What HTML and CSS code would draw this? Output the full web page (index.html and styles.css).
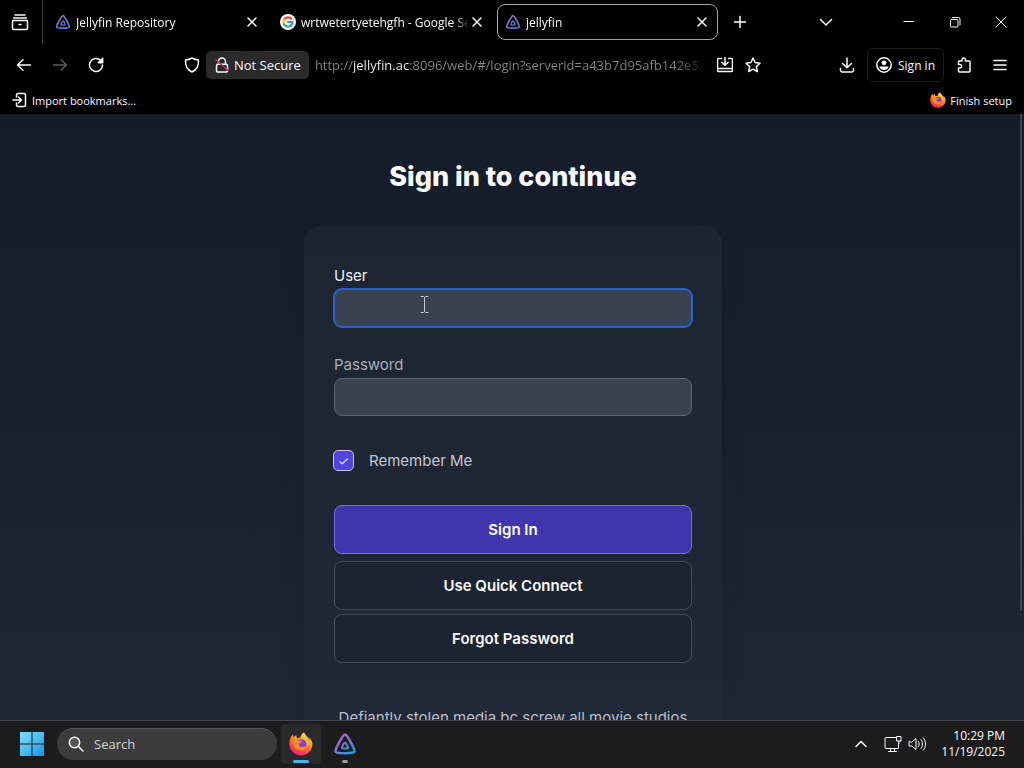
FILE: index.html
```html
<!DOCTYPE html>
<html lang="en">
<head>
  <meta charset="UTF-8">
  <meta name="viewport" content="width=device-width, initial-scale=1.0">
  <title>jellyfin</title>
  <link rel="stylesheet" href="styles.css">
</head>
<body>
  <!-- Shared icons -->
  <svg class="defs" width="0" height="0" aria-hidden="true">
    <defs>
      <linearGradient id="jellyGradient" x1="0" y1="0" x2="1" y2="1">
        <stop offset="0.25" stop-color="#a066cc"/>
        <stop offset="1" stop-color="#18a0e0"/>
      </linearGradient>
      <linearGradient id="jellyTabGradient" x1="0" y1="0" x2="1" y2="1">
        <stop offset="0.2" stop-color="#8a70b8"/>
        <stop offset="1" stop-color="#4a7fe0"/>
      </linearGradient>
      <linearGradient id="winGradient" x1="0" y1="0" x2="1" y2="1">
        <stop offset="0" stop-color="#7fe0fb"/>
        <stop offset="1" stop-color="#1299ea"/>
      </linearGradient>
      <linearGradient id="fireGradient" x1="0.8" y1="0" x2="0.3" y2="1">
        <stop offset="0" stop-color="#fff04a"/>
        <stop offset="0.4" stop-color="#ff9a25"/>
        <stop offset="0.75" stop-color="#ff4048"/>
        <stop offset="1" stop-color="#e52282"/>
      </linearGradient>
    </defs>
    <symbol id="close" viewBox="0 0 16 16"><path d="M4 4l8 8M12 4l-8 8"/></symbol>
    <symbol id="jellyfin" viewBox="0 0 24 24">
      <path d="M12 2.500C10 2.500 1.600 17.600 2.600 19.700c1 2 17.800 2 18.800 0C22.400 17.600 14 2.500 12 2.500z" stroke-width="2.600"/>
      <path d="M12 10.500c-.8 0-3.500 4.700-3.100 5.500.4.800 5.800.8 6.200 0 .4-.8-2.300-5.500-3.100-5.500z" stroke-width="2"/>
    </symbol>
    <symbol id="firefox" viewBox="0 0 24 24">
      <path d="M22.300 8.500c-.5-1.200-1.600-2.500-2.400-2.900.7 1.300 1 2.500 1.100 3.300C19.700 5.700 17.300 4.400 15.500 1.300 15 .6 15.100.4 15.100.2c-2.700 1.500-3.600 4-3.700 5.300-1 .1-2 .4-2.900.9C7.500 5.400 7.300 4.200 7.500 2.900 6.300 3.500 5.300 4.400 4.600 5.200c-.5-.6-.5-2.600-.4-3C2.600 3.500 1.500 5.500 1.200 7.300.5 9 .2 10.800.4 12.600.9 18.700 5.900 23.500 12 23.500c6.400 0 11.500-5.100 11.500-11.500 0-1.200-.4-2.600-1.200-3.500z" fill="url(#fireGradient)"/>
      <circle cx="12.200" cy="12.500" r="5.300" fill="#7542e5"/>
      <path d="M3.500 8.500c2-1.500 4.500-1.300 6 0 1 .2 2.700.2 3.500.4 0 1.500-2.300 1.700-3 2.900-.5 2.200 1.600 3.700 4 2.900 1.300-.4 2.300-.8 3.500.2-1.500 2.800-5 4.500-8.300 3.300C5.500 17 3.300 13 3.500 8.500z" fill="#ff8b20"/>
      <path d="M13.500 6.500c3 .5 5 3.500 4.300 7.200 1.500-1 2.300-3.100 1.700-5-.8-1.700-3.400-3-6-2.200z" fill="#ffb72c"/>
    </symbol>
  </svg>

  <!-- Browser tabs -->
  <header class="browser">
    <div class="tabs">
      <div class="tab-view">
        <button class="icon-button" aria-label="View tabs">
          <svg class="icon" viewBox="0 0 20 20"><path d="M5 3h10M3.500 6h13M3.500 8.500h13a1 1 0 0 1 1 1V16a1.500 1.500 0 0 1-1.500 1.500H4A1.500 1.500 0 0 1 2.500 16V9.500a1 1 0 0 1 1-1zM9 12.500h2"/></svg>
        </button>
      </div>
      <div class="tab">
        <svg class="favicon jelly-tab"><use href="#jellyfin"/></svg>
        <span class="tab-title">Jellyfin Repository</span>
        <button class="tab-close" aria-label="Close tab"><svg class="icon-small"><use href="#close"/></svg></button>
      </div>
      <div class="tab">
        <svg class="favicon" viewBox="0 0 16 16">
          <circle cx="8" cy="8" r="8" fill="#fff"/>
          <g fill="none" stroke-width="2.200">
            <path d="M11.400 4.800A4.600 4.600 0 0 0 4 5.700" stroke="#ea4335"/>
            <path d="M4 5.700a4.600 4.600 0 0 0 0 4.600" stroke="#fbbc05"/>
            <path d="M4 10.300a4.600 4.600 0 0 0 7 1.200" stroke="#34a853"/>
            <path d="M11 11.500A4.600 4.600 0 0 0 12.600 8H8" stroke="#4285f4"/>
          </g>
        </svg>
        <span class="tab-title">wrtwetertyetehgfh - Google Search</span>
        <button class="tab-close" aria-label="Close tab"><svg class="icon-small"><use href="#close"/></svg></button>
      </div>
      <div class="tab active">
        <svg class="favicon jelly-tab"><use href="#jellyfin"/></svg>
        <span class="tab-title">jellyfin</span>
        <button class="tab-close" aria-label="Close tab"><svg class="icon-small"><use href="#close"/></svg></button>
      </div>
      <button class="icon-button new-tab" aria-label="New tab"><svg class="icon-small" viewBox="0 0 16 16"><path d="M8 2.500v11M2.500 8h11"/></svg></button>
      <div class="window-buttons">
        <button class="icon-button list-tabs" aria-label="List all tabs"><svg class="icon-small" viewBox="0 0 16 16"><path d="M2.500 5.500L8 11l5.500-5.500"/></svg></button>
        <button class="icon-button" aria-label="Minimize"><svg class="icon-small thin" viewBox="0 0 16 16"><path d="M3 7.500h10"/></svg></button>
        <button class="icon-button" aria-label="Restore"><svg class="icon-small thin" viewBox="0 0 16 16"><rect x="3.500" y="5.500" width="7.500" height="7.500" rx="1"/><path d="M5.500 3.500h6a1.500 1.500 0 0 1 1.500 1.500v6"/></svg></button>
        <button class="icon-button" aria-label="Close window"><svg class="icon-small thin" viewBox="0 0 16 16"><path d="M3 3l10 10M13 3L3 13"/></svg></button>
      </div>
    </div>

    <!-- Address bar -->
    <div class="navbar">
      <div class="nav-buttons">
        <button class="icon-button" aria-label="Back"><svg class="icon-small" viewBox="0 0 16 16"><path d="M14.500 8H1.500M7 2.800L1.500 8 7 13.200"/></svg></button>
        <button class="icon-button" aria-label="Forward" disabled><svg class="icon-small" viewBox="0 0 16 16"><path d="M1.500 8h13M9 2.800L14.500 8 9 13.200"/></svg></button>
        <button class="icon-button" aria-label="Reload"><svg class="icon-small" viewBox="0 0 16 16"><path d="M14.500 8A6.500 6.500 0 1 1 12.500 3.300L14 4.800"/><path d="M14.700 1.300v4.400h-4.400z" fill="currentColor"/></svg></button>
      </div>
      <div class="address">
        <svg class="icon-small" viewBox="0 0 16 16"><path d="M8 1c2 1.300 4 1.900 6.500 2 .3 5.500-1.500 9.700-6.500 12C3 12.700 1.200 8.500 1.500 3 4 2.900 6 2.300 8 1z"/></svg>
        <button class="not-secure">
          <svg class="icon-small" viewBox="0 0 16 16"><path d="M4.500 7V4.500a3.500 3.500 0 0 1 7 0V7M4 7.200h8a1.500 1.500 0 0 1 1.500 1.500V14a1 1 0 0 1-1 1h-9a1 1 0 0 1-1-1V8.700A1.500 1.500 0 0 1 4 7.200z"/><path d="M2 3l12 10.500" stroke="#c02848"/></svg>
          Not Secure
        </button>
        <input class="url" type="text" aria-label="Address" value="http://jellyfin.ac:8096/web/#/login?serverid=a43b7d95afb142e5..." readonly>
        <button class="icon-button" aria-label="Install site"><svg class="icon-small" viewBox="0 0 16 16"><path d="M4.500 1.500H1.500a1 1 0 0 0-1 1v11a1 1 0 0 0 1 1h13a1 1 0 0 0 1-1v-11a1 1 0 0 0-1-1h-3M.5 11.500h15M8 .5v7.500M4.800 5.300L8 8.300l3.200-3"/></svg></button>
        <button class="icon-button" aria-label="Bookmark"><svg class="icon-small" viewBox="0 0 16 16"><path d="M8 1l2.100 4.500 4.900.7-3.600 3.400.9 4.900L8 12.200l-4.300 2.300.9-4.900L1 6.200l4.900-.7z"/></svg></button>
      </div>
      <div class="nav-tools">
        <button class="icon-button" aria-label="Downloads"><svg class="icon-small" viewBox="0 0 16 16"><path d="M8 1v9.500M3.500 6.500L8 10.800l4.500-4.300M1.500 11.500v1.500a2 2 0 0 0 2 2h9a2 2 0 0 0 2-2v-1.500"/></svg></button>
        <button class="account">
          <svg class="icon-small" viewBox="0 0 16 16"><circle cx="8" cy="8" r="7.200"/><circle cx="8" cy="5.800" r="2.400" fill="currentColor" stroke="none"/><path d="M3.500 9.500h9c-.2 2-2 3.500-4.500 3.500s-4.300-1.500-4.500-3.500z" fill="currentColor" stroke="none"/></svg>
          Sign in
        </button>
        <button class="icon-button" aria-label="Extensions"><svg class="icon-small" viewBox="0 0 16 16"><path d="M6 4V2.600a1.700 1.700 0 0 1 3.400 0V4H13a1 1 0 0 1 1 1v9a1 1 0 0 1-1 1H3.500a1 1 0 0 1-1-1v-3H4a1.700 1.700 0 0 0 0-3.400H2.500V5a1 1 0 0 1 1-1z"/></svg></button>
        <button class="icon-button" aria-label="Menu"><svg class="icon-small" viewBox="0 0 16 16"><path d="M2 3.500h12M2 8h12M2 12.500h12"/></svg></button>
      </div>
    </div>

    <!-- Bookmarks -->
    <div class="bookmarks">
      <button><svg class="icon-small" viewBox="0 0 16 16"><path d="M4.500 5V3a1.500 1.500 0 0 1 1.500-1.500h6A1.500 1.500 0 0 1 13.500 3v10a1.500 1.500 0 0 1-1.500 1.500H6A1.500 1.500 0 0 1 4.500 13v-2M1 8h8.500M6.500 5l3 3-3 3"/></svg>Import bookmarks...</button>
      <button><svg class="favicon"><use href="#firefox"/></svg>Finish setup</button>
    </div>
  </header>

  <!-- Login page -->
  <main>
    <div class="scroll-thumb"></div>
    <h1>Sign in to continue</h1>
    <form class="login">
      <div class="field">
        <label class="current" for="user">User</label>
        <input class="current" type="text" id="user">
        <svg class="cursor" viewBox="0 0 9 17"><path d="M1 .5h2.500l1 1 1-1H8M4.500 1.500v14M1 16.500h2.500l1-1 1 1H8"/></svg>
      </div>
      <div class="field">
        <label for="password">Password</label>
        <input type="password" id="password">
      </div>
      <label class="remember">
        <input type="checkbox" checked>
        <svg class="tick" viewBox="0 0 12 12"><path d="M2 6.800l2.300 2L9.500 3.800"/></svg>
        Remember Me
      </label>
      <button class="submit" type="submit">Sign In</button>
      <button type="button">Use Quick Connect</button>
      <button type="button">Forgot Password</button>
      <p class="disclaimer">Defiantly stolen media bc screw all movie studios</p>
    </form>
  </main>

  <!-- Taskbar -->
  <footer class="taskbar">
    <button class="start" aria-label="Start"><svg viewBox="0 0 24 24"><path d="M0 0h11.500v11.500H0zM12.500 0H24v11.500H12.500zM0 12.500h11.500V24H0zM12.500 12.500H24V24H12.500z" fill="url(#winGradient)"/></svg></button>
    <label class="search">
      <svg class="icon-small" viewBox="0 0 16 16"><circle cx="6.500" cy="6.500" r="5.200" fill="#575757"/><path d="M10.500 10.500L15 15"/></svg>
      <input type="text" placeholder="Search" aria-label="Search">
    </label>
    <button class="app open" aria-label="Firefox"><svg><use href="#firefox"/></svg></button>
    <button class="app" aria-label="Jellyfin"><svg class="jelly"><use href="#jellyfin"/></svg></button>
    <div class="tray">
      <button class="icon-button" aria-label="Show hidden icons"><svg class="icon-small" viewBox="0 0 16 16"><path d="M3 10.500L8 5.500l5 5"/></svg></button>
      <svg class="icon" viewBox="0 0 20 20"><path d="M13 3.500H3a1 1 0 0 0-1 1v9a1 1 0 0 0 1 1h12.500V9M7.500 14.500v3M11.500 14.500v3M5.500 17.500h8M14 2.500h4V7h-4zM16 7v2.500"/></svg>
      <svg class="icon" viewBox="0 0 20 20"><path d="M2 8v4h3l4 3.500v-11L5 8zM11.500 7.500c1 1.500 1 3.500 0 5M14 5.500c2 2.500 2 6.500 0 9M16.300 3.800c3 3.500 3 9 0 12.400"/></svg>
      <div class="clock">10:29 PM<br>11/19/2025</div>
    </div>
  </footer>
</body>
</html>
```

FILE: styles.css
```css
* {
  box-sizing: border-box;
}
body {
  margin: 0;
  height: 100vh;
  display: flex;
  flex-direction: column;
  background: #000;
  color: #fbfbfe;
  font: 12px "Open Sans", "Noto Sans", sans-serif;
}
button {
  padding: 0;
  border: 0;
  background: none;
  color: inherit;
  font: inherit;
}
svg {
  display: block;
  flex: none;
  fill: none;
  stroke-linecap: round;
  stroke-linejoin: round;
}
.defs {
  position: absolute;
}
.icon, .icon-small {
  width: 16px;
  height: 16px;
  stroke: currentColor;
  stroke-width: 1.5;
}
.icon {
  width: 20px;
  height: 20px;
}
.thin {
  stroke-width: 1;
}
.favicon {
  width: 16px;
  height: 16px;
}
.jelly-tab {
  stroke: url(#jellyTabGradient);
}
.jelly {
  stroke: url(#jellyGradient);
}
.icon-button {
  display: flex;
  align-items: center;
  justify-content: center;
}
.icon-button:disabled {
  color: #5c5c60;
}

/* Browser */
.tabs {
  display: flex;
  align-items: center;
  height: 44px;
}
.tab-view {
  display: flex;
  align-items: center;
  height: 100%;
  padding: 0 12px 0 10px;
  border-right: 1px solid #3a3a3a;
}
.tab {
  display: flex;
  align-items: center;
  gap: 5px;
  flex: 0 1 221px;
  min-width: 0;
  height: 36px;
  margin-left: 4px;
  padding: 0 7px;
  border: 1px solid transparent;
  border-radius: 8px;
}
.tab-title {
  flex: 1;
  overflow: hidden;
  white-space: nowrap;
  mask-image: linear-gradient(to right, #000 92%, transparent);
}
.active {
  border-color: #a5a5a0;
}
.tab-close {
  margin-left: -5px;
}
.new-tab {
  margin-left: 14px;
}
.window-buttons {
  display: flex;
  gap: 30px;
  margin-left: auto;
  padding-right: 15px;
}
.list-tabs {
  margin-right: 37px;
}
.navbar {
  display: flex;
  align-items: center;
  height: 42px;
  padding: 0 16px;
}
.nav-buttons {
  display: flex;
  gap: 20px;
}
.address {
  display: flex;
  align-items: center;
  flex: 1;
  gap: 6px;
  min-width: 0;
  margin: 0 78px 0 80px;
  font-size: 13px;
}
.not-secure {
  display: flex;
  align-items: center;
  gap: 4px;
  height: 28px;
  padding: 0 8px;
  border-radius: 5px;
  background: #2b2a2b;
  white-space: nowrap;
}
.url {
  flex: 1;
  min-width: 0;
  padding: 0;
  border: 0;
  background: linear-gradient(to right, #858585 39px, #fff 39px, #fff 95px, #858585 95px, #858585 360px, transparent 392px);
  background-clip: text;
  color: transparent;
  font: inherit;
}
.address .icon-button {
  margin-left: 6px;
}
.nav-tools {
  display: flex;
  align-items: center;
  gap: 12px;
}
.nav-tools .icon-button:last-child {
  margin-left: 8px;
}
.account {
  display: flex;
  align-items: center;
  gap: 6px;
  height: 34px;
  padding: 0 8px;
  border: 1px solid #1b1b1b;
  border-radius: 6px;
}
.bookmarks {
  display: flex;
  justify-content: space-between;
  height: 28px;
  padding: 0 12px;
  font-size: 11px;
}
.bookmarks button {
  display: flex;
  align-items: center;
  gap: 4px;
}

/* Login page */
main {
  position: relative;
  flex: 1;
  min-height: 0;
  overflow: hidden;
  padding: 44px 0 0 2px;
  background: linear-gradient(#141b29, #1e2735);
  font-family: Inter, "Liberation Sans", sans-serif;
  font-size: 15px;
}
.scroll-thumb {
  position: absolute;
  top: 0;
  right: 2px;
  width: 2px;
  height: 82%;
  background: #3c4350;
}
h1 {
  margin: 0 0 30px;
  font-size: 27px;
  line-height: 38px;
  font-weight: 800;
  text-align: center;
}
.login {
  width: 418px;
  max-width: 100%;
  margin: 0 auto;
  padding: 40px 30px;
  border-radius: 18px;
  background: linear-gradient(#1d2532, #202938);
  box-shadow: 0 8px 24px rgba(0, 0, 0, 0.1);
}
.field {
  position: relative;
  margin-bottom: 28px;
}
.field label {
  display: block;
  line-height: 20px;
  margin-bottom: 3px;
  color: #a9afb9;
}
.field label.current {
  color: #eef0f4;
}
.field input {
  display: block;
  width: 100%;
  height: 38px;
  padding: 0 10px;
  border: 1px solid #5b6470;
  border-radius: 8px;
  background: #394250;
  color: #fff;
  font: inherit;
}
.field input.current {
  border-color: #2b62d0;
  box-shadow: 0 0 0 1px #2b62d0;
}
.cursor {
  position: absolute;
  top: 30px;
  left: 86px;
  width: 9px;
  height: 17px;
  stroke: #c8ccd2;
}
.remember {
  position: relative;
  display: flex;
  align-items: center;
  gap: 16px;
  margin: 34px 0;
  color: #c4c9d1;
}
.remember input {
  appearance: none;
  width: 21px;
  height: 21px;
  margin: 0 -1px;
  border: 1px solid #c9c5fa;
  border-radius: 5px;
  background: #5145dc;
}
.tick {
  position: absolute;
  left: 4px;
  width: 12px;
  height: 12px;
  stroke: #d5d2ff;
  stroke-width: 1.5;
}
.login button {
  display: block;
  width: 100%;
  height: 49px;
  margin-bottom: 4px;
  border: 1px solid #434c5a;
  border-radius: 8px;
  background: #1c2432;
  font-weight: 600;
}
.login .submit {
  margin-bottom: 7px;
  border-color: #7a70dc;
  background: #3f36ae;
}
.disclaimer {
  margin: 45px 0 20px;
  color: #b9bec7;
  line-height: 20px;
  text-align: center;
}

/* Taskbar */
.taskbar {
  display: flex;
  align-items: center;
  height: 48px;
  padding: 0 19px 2px 20px;
  border-top: 1px solid #45464a;
  background: #1c1c1c;
}
.start svg {
  width: 24px;
  height: 24px;
}
.search {
  display: flex;
  align-items: center;
  gap: 10px;
  width: 220px;
  height: 32px;
  margin: 0 4px 0 13px;
  padding: 0 11px;
  border-top: 1px solid #555;
  border-radius: 16px;
  background: #3c3c3c;
}
.search input {
  min-width: 0;
  padding: 0;
  border: 0;
  background: none;
  color: #ddd;
  font: inherit;
  font-size: 13px;
}
.search input::placeholder {
  color: #d5d5d5;
}
.app {
  position: relative;
  display: flex;
  align-items: center;
  justify-content: center;
  width: 40px;
  height: 40px;
  margin-right: 4px;
  border-radius: 4px;
}
.app svg {
  width: 24px;
  height: 24px;
}
.app::after {
  content: "";
  position: absolute;
  bottom: 1px;
  width: 6px;
  height: 3px;
  border-radius: 2px;
  background: #9a9a9a;
}
.open {
  background: #2a2a2a;
}
.open::after {
  width: 16px;
  background: #4cb4e8;
}
.tray {
  display: flex;
  align-items: center;
  gap: 4px;
  margin-left: auto;
}
.tray .icon-button {
  margin-right: 10px;
}
.tray .icon {
  stroke-width: 1;
}
.clock {
  margin-left: 10px;
  font-size: 12px;
  line-height: 16px;
  text-align: right;
}
```
